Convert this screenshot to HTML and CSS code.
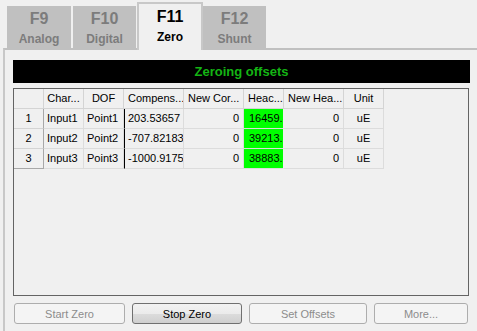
FILE: index.html
```html
<!DOCTYPE html>
<html lang="en">
<head>
    <meta charset="UTF-8">
    <title>Zero</title>
    <link rel="stylesheet" href="styles.css">
</head>
<body>
    <div class="tabs">
        <div class="tab tab-f9"><span class="key">F9</span><span class="name">Analog</span></div>
        <div class="tab tab-f10"><span class="key">F10</span><span class="name">Digital</span></div>
        <div class="tab tab-f11 active"><span class="key">F11</span><span class="name">Zero</span></div>
        <div class="tab tab-f12"><span class="key">F12</span><span class="name">Shunt</span></div>
    </div>

    <div class="panel">
        <div class="title-bar">Zeroing offsets</div>

        <div class="grid-box">
            <div class="grid">
                <div class="hd corner"></div>
                <div class="hd">Char...</div>
                <div class="hd">DOF</div>
                <div class="hd left">Compens...</div>
                <div class="hd left">New Cor...</div>
                <div class="hd left">Heac...</div>
                <div class="hd left">New Hea...</div>
                <div class="hd">Unit</div>

                <div class="rn">1</div>
                <div class="cell">Input1</div>
                <div class="cell">Point1</div>
                <div class="cell sel">203.53657</div>
                <div class="cell num">0</div>
                <div class="cell hot">16459.87</div>
                <div class="cell num">0</div>
                <div class="cell mid">uE</div>

                <div class="rn">2</div>
                <div class="cell">Input2</div>
                <div class="cell">Point2</div>
                <div class="cell sel">-707.82183</div>
                <div class="cell num">0</div>
                <div class="cell hot">39213.56</div>
                <div class="cell num">0</div>
                <div class="cell mid">uE</div>

                <div class="rn">3</div>
                <div class="cell">Input3</div>
                <div class="cell">Point3</div>
                <div class="cell sel">-1000.9175</div>
                <div class="cell num">0</div>
                <div class="cell hot">38883.12</div>
                <div class="cell num">0</div>
                <div class="cell mid">uE</div>
            </div>
        </div>

        <div class="buttons">
            <button class="btn w-start" disabled>Start Zero</button>
            <button class="btn w-stop">Stop Zero</button>
            <button class="btn w-set" disabled>Set Offsets</button>
            <button class="btn w-more" disabled>More...</button>
        </div>
    </div>
</body>
</html>
```

FILE: styles.css
```css
html, body {
    margin: 0;
    height: 100%;
}
body {
    font-family: "Liberation Sans", Arial, sans-serif;
    font-size: 11px;
    color: #000;
    background-color: #f0f0f0;
    display: flex;
    flex-direction: column;
    overflow: hidden;
}

/* tab strip */
.tabs {
    display: flex;
    align-items: flex-end;
    height: 48px;
    padding-left: 7px;
    position: relative;
    z-index: 1;
}
.tab {
    box-sizing: border-box;
    height: 42px;
    background-color: #c0c0c0;
    color: #7c7c7c;
    font-weight: bold;
    display: flex;
    flex-direction: column;
    align-items: center;
    padding-top: 3px;
}
.tab-f9 { width: 64px; margin-right: 2px; }
.tab-f10 { width: 63px; margin-right: 1px; }
.tab-f11 { width: 66px; }
.tab-f12 { width: 63px; }
.tab .key {
    font-size: 16px;
    line-height: 20px;
}
.tab .name {
    font-size: 12px;
    line-height: 20px;
}
.tab.active {
    height: 48px;
    margin-bottom: -2px;
    background-color: #f0f0f0;
    color: #000;
    border: 2px solid #c8c8c8;
    border-bottom: none;
    padding-top: 3px;
}

/* panel */
.panel {
    flex: 1;
    margin-left: 3px;
    border-left: 2px solid #c8c8c8;
    border-top: 2px solid #c0c0c0;
    padding: 10px 7px 0 8px;
    display: flex;
    flex-direction: column;
}
.title-bar {
    height: 23px;
    line-height: 23px;
    background-color: #000;
    color: #14b414;
    font-size: 13px;
    font-weight: bold;
    text-align: center;
}
.grid-box {
    box-sizing: border-box;
    height: 208px;
    margin-top: 5px;
    margin-right: 1px;
    border: 1px solid #646464;
}
.grid {
    display: grid;
    grid-template-columns: 30px 40px 40px 60px 60px 40px 60px 40px;
    grid-auto-rows: 20px;
    width: 370px;
}
.hd, .rn, .cell {
    box-sizing: border-box;
    line-height: 19px;
    white-space: nowrap;
    overflow: hidden;
}
.hd {
    text-align: center;
    border-right: 1px solid #d4d4d4;
    border-bottom: 1px solid #d4d4d4;
    padding: 0 2px;
}
.hd.left {
    text-align: left;
    padding-left: 4px;
}
.rn {
    text-align: center;
    border-right: 1px solid #a8a8a8;
    border-bottom: 1px solid #d4d4d4;
}
.rn:nth-last-child(8) {
    border-bottom-color: #a8a8a8;
}
.cell {
    padding: 0 3px;
    border-right: 1px solid #dcdcdc;
    border-bottom: 1px solid #dcdcdc;
    text-overflow: clip;
}
.cell.sel {
    border-left: 1px solid #000;
    padding-left: 3px;
}
.cell.num {
    text-align: right;
    padding-right: 4px;
}
.cell.mid {
    text-align: center;
}
.cell.hot {
    background-color: #00ff00;
    padding-left: 5px;
    border-right-color: #f0f0f0;
}

/* buttons */
.buttons {
    display: flex;
    gap: 7px;
    margin-top: 7px;
    padding-left: 1px;
}
.btn {
    box-sizing: border-box;
    height: 21px;
    font-family: "Liberation Sans", Arial, sans-serif;
    font-size: 11px;
    color: #000;
    border: 1px solid #707070;
    border-radius: 3px;
    background: linear-gradient(#f2f2f2, #ebebeb 50%, #dcdcdc 51%, #cfcfcf);
    padding: 0;
}
.btn:disabled {
    color: #8c8c8c;
    border-color: #adadad;
    background: #f4f4f4;
}
.w-start { width: 111px; }
.w-stop { width: 110px; }
.w-set { width: 118px; }
.w-more { width: 94px; }
```
